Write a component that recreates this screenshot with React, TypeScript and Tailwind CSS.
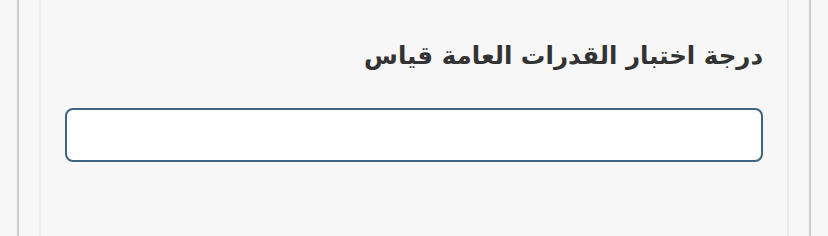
import React from "react";

export default function App() {
  return (
    <div className="h-[236px] w-full bg-[#f7f7f7] px-[17px] overflow-hidden" style={{ fontFamily: '"DejaVu Sans", sans-serif' }}>
      <div className="h-full border-x-2 border-[#cbcbcb] px-[20px]">
        <div className="h-full border-x-2 border-[#ebebeb] px-[24px] pt-[39px]" dir="rtl">
          <h2 className="text-[24.5px] font-bold text-[#333333] leading-[34px]">درجة اختبار القدرات العامة قياس</h2>
          <input
            type="text"
            className="mt-[35px] block w-full h-[54px] rounded-[8px] border-2 border-[#3e6581] bg-white outline-none"
          />
        </div>
      </div>
    </div>
  );
}
